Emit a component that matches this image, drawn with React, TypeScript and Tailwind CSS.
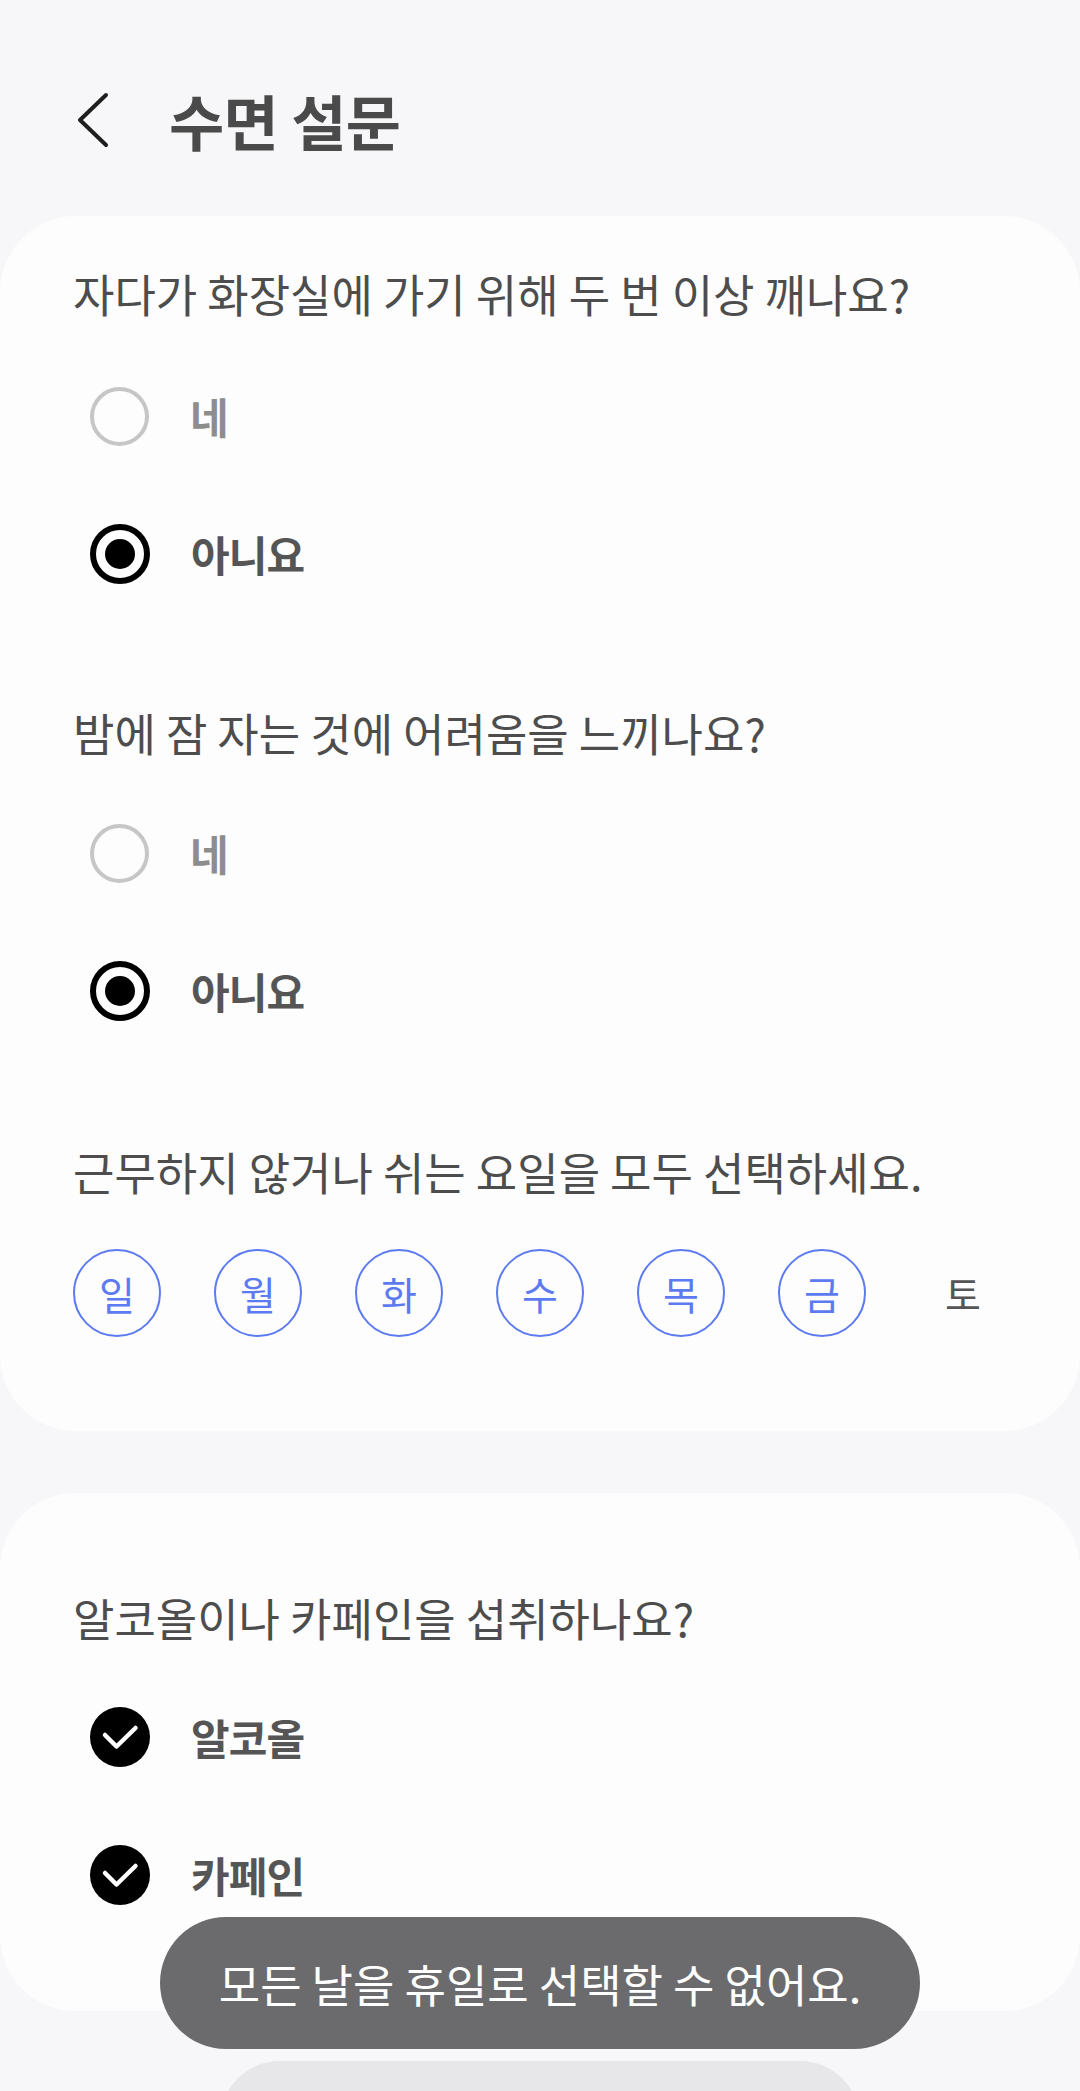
import React from 'react';

const font = { fontFamily: '"Noto Sans CJK KR", "Noto Sans", sans-serif' };

function Radio({ label, checked }: { label: string; checked: boolean }) {
    return (
        <div className="h-[138px] flex items-center pl-[90px] gap-[41px]">
            {checked ? (
                <span className="w-[60px] h-[60px] rounded-full border-[6px] border-black flex items-center justify-center">
                    <span className="w-[30px] h-[30px] rounded-full bg-black" />
                </span>
            ) : (
                <span className="w-[59px] h-[59px] rounded-full border-[4px] border-[#c6c6c6]" />
            )}
            <span className={`text-[42px] font-semibold tracking-[-0.02em] leading-none ${checked ? 'text-[#555555]' : 'text-[#8d8d8d]'}`}>
                {label}
            </span>
        </div>
    );
}

function Check({ label }: { label: string }) {
    return (
        <div className="h-[138px] flex items-center pl-[90px] gap-[41px]">
            <svg width="60" height="60" viewBox="0 0 60 60">
                <circle cx="30" cy="30" r="30" fill="#000" />
                <path d="M15 28 L26.5 39.5 L45.5 21" fill="none" stroke="#fff" strokeWidth="4.5" strokeLinecap="round" strokeLinejoin="round" />
            </svg>
            <span className="text-[42px] font-semibold tracking-[-0.02em] leading-none text-[#555555]">{label}</span>
        </div>
    );
}

function Question({ text }: { text: string }) {
    return (
        <div className="h-[56px] flex items-center pl-[73px] text-[45px] text-[#4d4d4d] leading-none whitespace-nowrap">
            {text}
        </div>
    );
}

const days = ['일', '월', '화', '수', '목', '금', '토'];

export default function App() {
    return (
        <div className="relative h-[2091px] w-[1080px] overflow-hidden bg-[#f7f7f9]" style={font}>
            {/* Header */}
            <div className="h-[216px] pt-[24px] flex items-center pl-[77px] gap-[60px]">
                <svg width="32" height="56" viewBox="0 0 32 56">
                    <path d="M29 3 L3 28 L29 53" fill="none" stroke="#1f1f1f" strokeWidth="4" strokeLinecap="round" strokeLinejoin="round" />
                </svg>
                <h1 className="text-[60px] font-bold text-[#4a4a4a] leading-none tracking-[-0.01em]">수면 설문</h1>
            </div>

            {/* Card 1 */}
            <div className="bg-[#fdfdfd] rounded-[76px] pt-[49px] pb-[94px]">
                <Question text="자다가 화장실에 가기 위해 두 번 이상 깨나요?" />
                <div className="mt-[26px]">
                    <Radio label="네" checked={false} />
                    <Radio label="아니요" checked />
                </div>

                <div className="mt-[81px]">
                    <Question text="밤에 잠 자는 것에 어려움을 느끼나요?" />
                </div>
                <div className="mt-[24px]">
                    <Radio label="네" checked={false} />
                    <Radio label="아니요" checked />
                </div>

                <div className="mt-[83px]">
                    <Question text="근무하지 않거나 쉬는 요일을 모두 선택하세요." />
                </div>
                <div className="mt-[50px] flex pl-[73px] gap-[53px]">
                    {days.map((d, i) => (
                        <div
                            key={d}
                            className={`w-[88px] h-[88px] rounded-full flex items-center justify-center text-[39px] leading-none ${i < 6 ? 'border-2 border-[#5d7bf0] text-[#5d7bf0]' : 'text-[#555555]'}`}
                        >
                            {d}
                        </div>
                    ))}
                </div>
            </div>

            {/* Card 2 */}
            <div className="mt-[62px] bg-[#fdfdfd] rounded-[76px] pt-[96px] pb-[67px]">
                <Question text="알코올이나 카페인을 섭취하나요?" />
                <div className="mt-[23px]">
                    <Check label="알코올" />
                    <Check label="카페인" />
                </div>
            </div>

            {/* Bottom button (partially visible) */}
            <div className="mt-[50px] mx-auto w-[640px] h-[120px] rounded-[64px] bg-[#e7e7e9]" />

            {/* Toast */}
            <div className="absolute left-[160px] top-[1917px] w-[760px] h-[132px] rounded-full bg-[#6b6b6d] flex items-center justify-center">
                <span className="text-[45px] text-white leading-none">모든 날을 휴일로 선택할 수 없어요.</span>
            </div>
        </div>
    );
}
